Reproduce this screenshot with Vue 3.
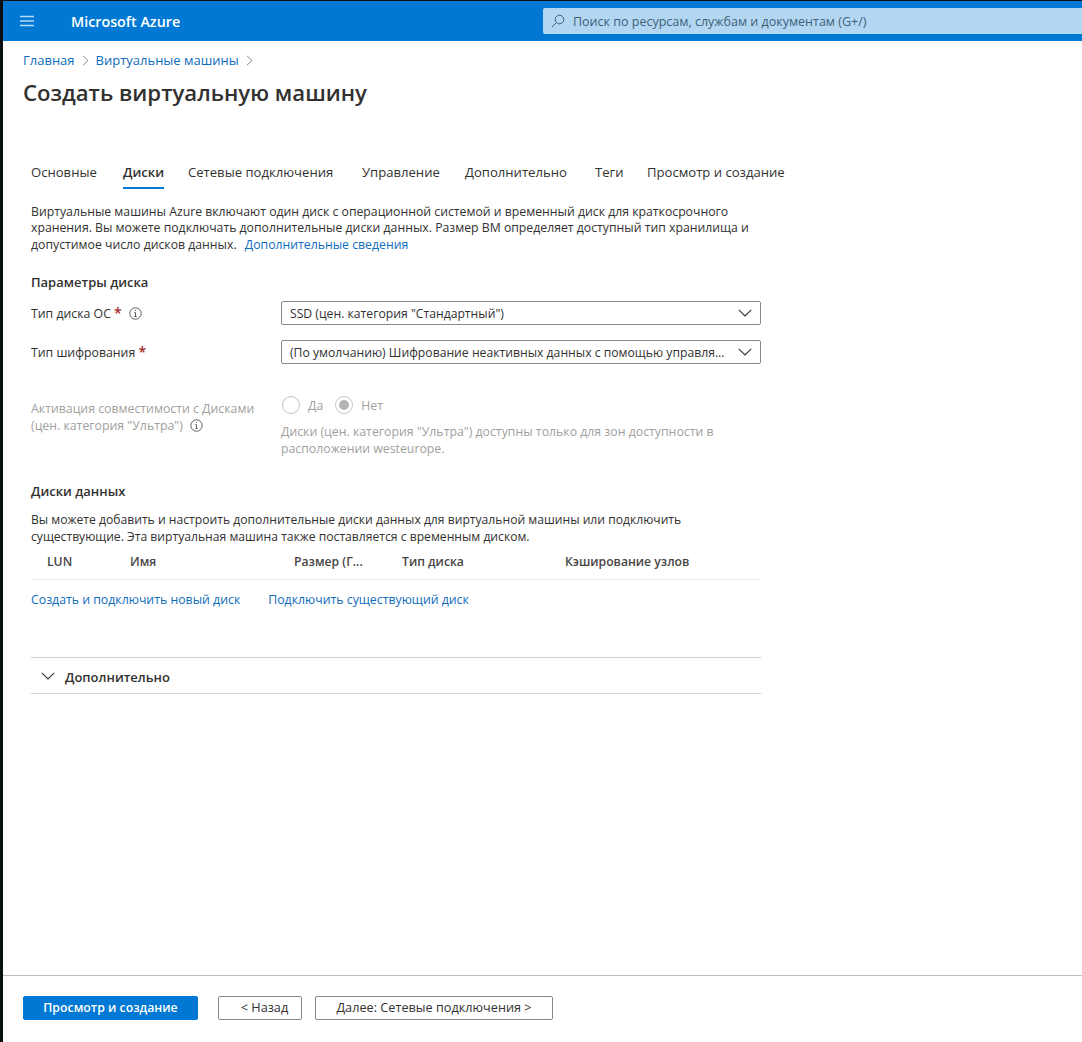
<script setup>
const tabs = ['Основные', 'Диски', 'Сетевые подключения', 'Управление', 'Дополнительно', 'Теги', 'Просмотр и создание']
const columns = ['LUN', 'Имя', 'Размер (Г...', 'Тип диска', 'Кэширование узлов']
</script>

<template>
  <div class="page">
    <header class="topbar">
      <svg class="menu" width="14" height="12" viewBox="0 0 14 12"><path d="M0 1.5h14M0 6h14M0 10.500h14" stroke="#b9dcf5" stroke-width="1.400" fill="none"/></svg>
      <span class="brand">Microsoft Azure</span>
      <div class="search">
        <svg width="14" height="14" viewBox="0 0 14 14" fill="none" stroke="#33658c" stroke-width="1"><circle cx="8.500" cy="5.500" r="4.300"/><path d="M5.300 8.700L.8 13.200"/></svg>
        <span>Поиск по ресурсам, службам и документам (G+/)</span>
      </div>
    </header>

    <main class="content">
      <nav class="crumbs">
        <a>Главная</a>
        <svg width="7" height="11" viewBox="0 0 7 11" fill="none" stroke="#8a8886"><path d="M1 .8l5 4.700-5 4.700"/></svg>
        <a>Виртуальные машины</a>
        <svg width="7" height="11" viewBox="0 0 7 11" fill="none" stroke="#8a8886"><path d="M1 .8l5 4.700-5 4.700"/></svg>
      </nav>
      <h1>Создать виртуальную машину</h1>

      <div class="tabs">
        <span v-for="tab in tabs" :key="tab" class="tab" :class="{ active: tab === 'Диски' }"><span class="tab-label">{{ tab }}</span></span>
      </div>

      <section class="panel">
        <p class="intro">Виртуальные машины Azure включают один диск с операционной системой и временный диск для краткосрочного<br>хранения. Вы можете подключать дополнительные диски данных. Размер ВМ определяет доступный тип хранилища и<br>допустимое число дисков данных. <a class="more">Дополнительные сведения</a></p>

        <h2 class="params">Параметры диска</h2>

        <div class="row first">
          <div class="label">Тип диска ОС <b>*</b>
            <svg class="info wide" width="13" height="13" viewBox="0 0 13 13" fill="none" stroke="#605e5c"><circle cx="6.500" cy="6.500" r="5.700"/><path d="M6.500 5.500v4M5.300 9.500h2.400M5.300 5.500h1.200M6.500 3v1"/></svg>
          </div>
          <div class="select"><span>SSD (цен. категория "Стандартный")</span>
            <svg width="14" height="8" viewBox="0 0 14 8" fill="none" stroke="#323130" stroke-width="1.100"><path d="M.8.8L7 7l6.200-6.200"/></svg>
          </div>
        </div>
        <div class="row second">
          <div class="label">Тип шифрования <b>*</b></div>
          <div class="select"><span>(По умолчанию) Шифрование неактивных данных с помощью управля...</span>
            <svg width="14" height="8" viewBox="0 0 14 8" fill="none" stroke="#323130" stroke-width="1.100"><path d="M.8.8L7 7l6.200-6.200"/></svg>
          </div>
        </div>

        <div class="row ultra">
          <div class="label muted">Активация совместимости с Дисками<br>(цен. категория "Ультра")
            <svg class="info" width="13" height="13" viewBox="0 0 13 13" fill="none" stroke="#605e5c"><circle cx="6.500" cy="6.500" r="5.700"/><path d="M6.500 5.500v4M5.300 9.500h2.400M5.300 5.500h1.200M6.500 3v1"/></svg>
          </div>
          <div class="muted">
            <div class="radios">
              <span class="radio"></span><span class="radio-text">Да</span>
              <span class="radio on"></span><span>Нет</span>
            </div>
            <p class="hint">Диски (цен. категория "Ультра") доступны только для зон доступности в<br>расположении westeurope.</p>
          </div>
        </div>

        <h2 class="data">Диски данных</h2>
        <p class="data-text">Вы можете добавить и настроить дополнительные диски данных для виртуальной машины или подключить<br>существующие. Эта виртуальная машина также поставляется с временным диском.</p>

        <div class="table-head">
          <span v-for="col in columns" :key="col">{{ col }}</span>
        </div>
        <div class="actions">
          <a>Создать и подключить новый диск</a>
          <a>Подключить существующий диск</a>
        </div>

        <div class="advanced">
          <svg width="14" height="8" viewBox="0 0 14 8" fill="none" stroke="#323130" stroke-width="1.100"><path d="M.8.8L7 7l6.200-6.200"/></svg>
          <span>Дополнительно</span>
        </div>
      </section>
    </main>

    <footer class="footer">
      <button class="primary">Просмотр и создание</button>
      <button class="secondary back">&lt; Назад</button>
      <button class="secondary next">Далее: Сетевые подключения &gt;</button>
    </footer>
  </div>
</template>

<style>
html, body { margin: 0; background: #fff; }
</style>

<style scoped>
.page {
  box-sizing: border-box;
  width: 1082px;
  height: 1042px;
  border-left: 3px solid #0a0f12;
  border-top: 1px solid #0a0f12;
  display: flex;
  flex-direction: column;
  font-family: "Open Sans", "Noto Sans", sans-serif;
  font-size: 12.300px;
  line-height: 17px;
  color: #323130;
  background: #fff;
  overflow: hidden;
}
.topbar {
  flex: none;
  height: 40px;
  background: #0078d4;
  display: flex;
  align-items: center;
}
.menu { margin-left: 17px; }
.brand {
  margin-left: 37px;
  width: 472px;
  color: #fff;
  font-size: 14.300px;
  font-weight: 600;
}
.search {
  flex: 1;
  height: 26px;
  background: #b3d7f2;
  border-radius: 2px 0 0 2px;
  display: flex;
  align-items: center;
  gap: 8px;
  padding-left: 8px;
  color: #3f5f78;
  font-size: 12.500px;
}
.content { flex: 1; min-height: 0; }
.crumbs {
  display: flex;
  align-items: center;
  gap: 7px;
  padding: 10px 0 0 20px;
  height: 18px;
  font-size: 13px;
}
a { color: #0f6cbd; }
h1 {
  margin: 8px 0 0 20px;
  font-size: 22.150px;
  line-height: 30px;
  font-weight: 600;
  color: #323130;
}
.tabs {
  margin: 51px 0 0 28px;
  display: grid;
  grid-template-columns: 92px 65px 174px 103px 130px 52px auto;
  height: 37px;
  font-size: 13.100px;
}
.tab { display: block; }
.tab-label {
  display: inline-block;
  height: 31px;
  padding-top: 6px;
  box-sizing: border-box;
}
.active .tab-label {
  font-weight: 600;
  border-bottom: 2px solid #0078d4;
}
.panel { width: 730px; margin-left: 28px; }
.intro { margin: 0; padding-top: 8.500px; line-height: 16.500px; font-size: 12.250px; }
.more { margin-left: 5px; }
h2 {
  margin: 0;
  font-size: 13px;
  line-height: 17px;
  font-weight: 600;
}
.params { margin-top: 21px; }
.row {
  display: grid;
  grid-template-columns: 250px 480px;
}
.first { margin-top: 10px; }
.second { margin-top: 15px; }
.ultra { margin-top: 32px; }
.label { padding-top: 4px; }
.label b { color: #a4262c; font-weight: 600; font-size: 14px; line-height: 14px; }
.info { margin-left: 4px; vertical-align: -2px; }
.info.wide { margin-left: 7px; }
.select {
  box-sizing: border-box;
  height: 24px;
  border: 1px solid #8a8886;
  border-radius: 2px;
  display: flex;
  align-items: center;
  justify-content: space-between;
  gap: 10px;
  padding: 0 8px;
  font-size: 12.200px;
}
.select span { white-space: nowrap; }
.select svg { flex: none; }
.muted { color: #a19f9d; }
.radios {
  display: flex;
  align-items: center;
  height: 18px;
  padding-left: 1px;
}
.radio {
  box-sizing: border-box;
  width: 18px;
  height: 18px;
  border: 1px solid #c8c6c4;
  border-radius: 50%;
  margin-right: 8px;
  position: relative;
}
.radio-text { margin-right: 12px; }
.radio.on::after {
  content: "";
  position: absolute;
  inset: 3px;
  border-radius: 50%;
  background: #b5b3b1;
}
.hint { margin: 9px 0 0; }
.data { margin-top: 26px; }
.data-text { margin: 11px 0 0; font-size: 12.150px; }
.table-head {
  margin-top: 8px;
  height: 26px;
  display: grid;
  grid-template-columns: 83px 164px 108px 163px auto;
  padding-left: 16px;
  border-bottom: 1px solid #edebe9;
  font-weight: 600;
  font-size: 12.200px;
  color: #484644;
}
.actions {
  margin-top: 11px;
  display: flex;
  gap: 28px;
}
.advanced {
  margin-top: 49px;
  height: 32px;
  border-top: 1px solid #d2d0ce;
  border-bottom: 1px solid #d2d0ce;
  display: flex;
  align-items: center;
  gap: 10px;
  padding: 3px 0 0 10px;
  font-weight: 600;
  font-size: 13px;
}
.advanced svg { margin-top: -3px; }
.footer {
  flex: none;
  box-sizing: border-box;
  height: 67px;
  border-top: 1px solid #bdbdbd;
  display: flex;
  align-items: flex-start;
  padding: 20px 0 0 20px;
}
button {
  box-sizing: border-box;
  height: 24px;
  border-radius: 2px;
  font-family: inherit;
  font-size: 12.300px;
  line-height: 17px;
  padding: 0 0 2px;
}
.primary {
  width: 175px;
  margin-right: 20px;
  border: 1px solid #0078d4;
  background: #0078d4;
  color: #fff;
  font-weight: 600;
}
.secondary {
  border: 1px solid #8a8886;
  background: #fff;
  color: #323130;
  font-size: 12.700px;
}
.back { width: 84px; margin-right: 13px; padding-left: 9px; }
.next { width: 238px; }
</style>
